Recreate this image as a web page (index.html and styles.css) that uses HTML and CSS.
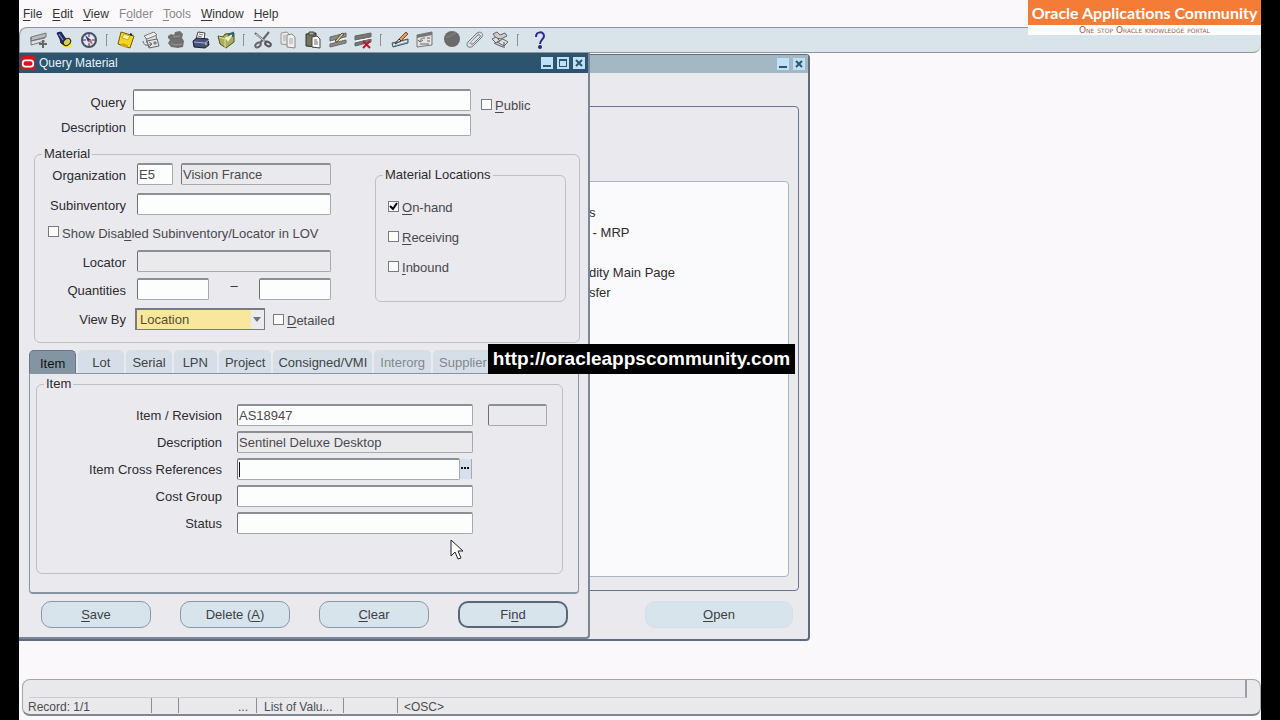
FILE: index.html
```
<!DOCTYPE html>
<html lang="en">
<head>
<meta charset="utf-8">
<title>Query Material</title>
<link rel="stylesheet" href="styles.css">
</head>
<body>
<div class="app">
  <nav class="menubar">
    <button class="menu"><u>F</u>ile</button>
    <button class="menu"><u>E</u>dit</button>
    <button class="menu"><u>V</u>iew</button>
    <button class="menu dim">F<u>o</u>lder</button>
    <button class="menu dim"><u>T</u>ools</button>
    <button class="menu"><u>W</u>indow</button>
    <button class="menu"><u>H</u>elp</button>
  </nav>

  <div class="toolbar">
    <button class="tool" aria-label="New"><svg viewBox="0 0 20 20"><path d="M2 7l15-4v4L2 11zM2 11l14-3M2 15l14-4M2 7v8" fill="#bbb" stroke="#777"/><path d="M14 10v8M10 14h8" stroke="#666" stroke-width="2"/></svg></button>
    <button class="tool" aria-label="Find"><svg viewBox="0 0 20 20"><ellipse cx="13" cy="15" rx="5" ry="3" fill="#f4e94a"/><path d="M3 3l4-1 4 6 3 2-4 5-3-2-1-4z" fill="#24306e" stroke="#111540"/><path d="M5 4l4 6" stroke="#8fa4de"/><ellipse cx="13" cy="12" rx="4" ry="3" transform="rotate(-40 13 12)" fill="#d9cf48" stroke="#222"/></svg></button>
    <button class="tool" aria-label="Navigator"><svg viewBox="0 0 20 20"><circle cx="10" cy="10" r="7" fill="#e6e9f2" stroke="#4b4e6a" stroke-width="2"/><path d="M10 4v3M10 13v3M4 10h3M13 10h3" stroke="#333"/><path d="M6 5l6 5-3 2z" fill="#26357e"/><path d="M14 15l-5-4 3-2z" fill="#b56a72"/></svg></button>
    <span class="sep"></span>
    <button class="tool" aria-label="Save"><svg viewBox="0 0 20 20"><path d="M5 2l13 4-4 12-12-4z" fill="#f5d51f" stroke="#6b5a12"/><path d="M8 4l6 2-2 4-6-2z" fill="#fff3a0" stroke="#c9ac22"/><path d="M7 13l5 2-1 3-6-2z" fill="#d2a514"/><path d="M14 4l2 1" stroke="#222" stroke-width="2"/></svg></button>
    <button class="tool" aria-label="Next Step"><svg viewBox="0 0 20 20"><path d="M3 6l10-4 3 3-10 4zM5 8l1 5M15 6l1 4" fill="#eee" stroke="#777"/><path d="M6 11l10-2 2 7-10 2z" fill="#e8e8e8" stroke="#666"/><path d="M2 11c1 5 4 5 8 3M8 12l3 2-3 3M14 11v4M12 13h4" stroke="#666" fill="none"/></svg></button>
    <button class="tool" aria-label="Switch Responsibility"><svg viewBox="0 0 20 20"><path d="M2 6l3-2 3 1 1-3 5-1 3 3-1 4 2 3-1 6-5 1-7-1-3-4 2-3-2-2z" fill="#707070"/><path d="M5 13l4 2 7-1M7 7l7-1" stroke="#989898"/></svg></button>
    <button class="tool" aria-label="Print"><svg viewBox="0 0 20 20"><path d="M7 2l7 1-1 7-8-1z" fill="#fff" stroke="#444"/><path d="M8 4l4 1M7 6l4 1" stroke="#777"/><path d="M2 11l4-3 11 1 1 6-4 3-11-1z" fill="#48527b" stroke="#171d40"/><path d="M3 12l11 1 4-3" stroke="#a6b4d0"/><circle cx="15" cy="14" r="1" fill="#d7cd58"/></svg></button>
    <button class="tool" aria-label="Close Form"><svg viewBox="0 0 20 20"><path d="M2 6l5 1 2-3 9-1v9l-8 6-6-4z" fill="#a9ae58" stroke="#4d5222"/><path d="M3 7l6 2v9M9 9l8-5" stroke="#dfe3a0"/><path d="M10 7l2 3 4-6" fill="none" stroke="#f3f5e4" stroke-width="2"/><path d="M12 5l5-2v4" fill="none" stroke="#3a6070" stroke-width="2"/></svg></button>
    <span class="sep"></span>
    <button class="tool" aria-label="Cut"><svg viewBox="0 0 20 20"><path d="M2 3l12 10M16 2L7 13" stroke="#666" stroke-width="2"/><path d="M3 4l11 9" stroke="#ddd"/><ellipse cx="5" cy="15" rx="3" ry="2" fill="none" stroke="#666" stroke-width="2" transform="rotate(-35 5 15)"/><ellipse cx="15" cy="14" rx="3" ry="2" fill="none" stroke="#555" stroke-width="2" transform="rotate(30 15 14)"/></svg></button>
    <button class="tool" aria-label="Copy"><svg viewBox="0 0 20 20"><path d="M3 3l6-1 2 2v11l-8-1z" fill="#e6e6e6" stroke="#999"/><path d="M9 5l5-1 3 3v11l-8-1z" fill="#eee" stroke="#888"/><path d="M11 9h4M11 11h4M11 13h4M5 6h3M5 8h3M5 10h3" stroke="#aaa"/></svg></button>
    <button class="tool" aria-label="Paste"><svg viewBox="0 0 20 20"><path d="M3 4l10-1v14l-10-1z" fill="#74765c" stroke="#333"/><path d="M6 2h5v3H6z" fill="#aaa" stroke="#444"/><path d="M9 7l5-1 3 3v9l-8-1z" fill="#fff" stroke="#444"/><path d="M11 10h3M11 12h4M11 14h4" stroke="#666"/></svg></button>
    <button class="tool" aria-label="Clear Record"><svg viewBox="0 0 20 20"><path d="M2 7l16-4v4L2 11zM2 14l16-4v3L2 17z" fill="#8b8b8b" stroke="#666"/><path d="M3 12l15-4" stroke="#fff"/><path d="M7 11l7-8 2 1-7 8z" fill="#ddd29a" stroke="#544b2d"/></svg></button>
    <button class="tool" aria-label="Delete"><svg viewBox="0 0 20 20"><path d="M2 6l16-3v4L2 10zM2 13l16-4v3L2 16z" fill="#777" stroke="#666"/><path d="M3 11l15-3" stroke="#fff"/><path d="M10 11l7 7M17 11l-7 7" stroke="#bb1830" stroke-width="2"/></svg></button>
    <span class="sep"></span>
    <button class="tool" aria-label="Edit Field"><svg viewBox="0 0 20 20"><path d="M2 13l16-4v4L3 17z" fill="#8fb4c0" stroke="#456"/><path d="M3 15l14-4" stroke="#fff"/><path d="M9 9l7-7 2 2-7 7z" fill="#e89a52" stroke="#775033"/><path d="M11 11l-6 3 4-5z" fill="#ddd" stroke="#333"/></svg></button>
    <button class="tool" aria-label="Zoom"><svg viewBox="0 0 20 20"><path d="M2 5l15-3v13L2 17z" fill="#e3e3e3" stroke="#777"/><path d="M2 5l15-3v3L2 8z" fill="#777"/><path d="M12 8h3M12 11h3M5 14h9M10 8c-4 0-5 2-5 4M3 10l2 2 3-2" stroke="#666" fill="none"/></svg></button>
    <button class="tool" aria-label="Translations"><svg viewBox="0 0 20 20"><circle cx="12" cy="9" r="8" fill="#6b6b6b"/><path d="M6 7c4 1 6-4 10-4" fill="none" stroke="#8c8c8c"/></svg></button>
    <button class="tool" aria-label="Attachments"><svg viewBox="0 0 20 20"><path d="M3 12l9-9c3-2 7 0 5 4l-9 9c-4 3-8 0-5-4zM6 12l7-7c2-1 3 1 2 2l-7 7c-2 1-3-1-2-2z" fill="none" stroke="#777"/><path d="M4 14l10-11" stroke="#bbb"/></svg></button>
    <button class="tool" aria-label="Folder Tools"><svg viewBox="0 0 20 20"><path d="M3 4l4-2 3 3 5-2 2 3-6 3-5-1z" fill="#ccc" stroke="#666"/><path d="M2 9l4-2 4 4-4 2zM7 12l6-3 5 3-4 4z" fill="#ddd" stroke="#666"/><path d="M8 15l5 2M14 12v6M4 13l4 2" stroke="#555"/></svg></button>
    <span class="sep"></span>
    <button class="tool" aria-label="Help"><svg viewBox="0 0 20 20"><path d="M9 7c0-6 8-6 8-1 0 3-4 4-4 8" fill="none" stroke="#28288e" stroke-width="2"/><circle cx="13" cy="17" r="2" fill="#28288e"/></svg></button>
  </div>

  <main class="desktop">
    <section class="window navigator">
      <header class="titlebar faded">
        <button class="winbtn" aria-label="Minimize"><svg viewBox="0 0 12 12"><path d="M2 9h8" stroke="#2d566f" stroke-width="2"/></svg></button>
        <button class="winbtn" aria-label="Close"><svg viewBox="0 0 12 12"><path d="M3 3l6 6M9 3l-6 6" stroke="#2d566f" stroke-width="2"/></svg></button>
      </header>
      <div class="nav-panel">
        <ul class="nav-list">
          <li>s</li>
          <li>&nbsp;- MRP</li>
          <li>&nbsp;</li>
          <li>dity Main Page</li>
          <li>sfer</li>
        </ul>
      </div>
      <div class="nav-actions"><button class="btn plain"><span><u>O</u>pen</span></button></div>
    </section>

    <section class="window query">
      <header class="titlebar">
        <svg class="logo" viewBox="0 0 16 16"><rect width="16" height="16" rx="2" fill="#d3161f"/><rect x="2" y="5" width="12" height="7" rx="3" fill="none" stroke="#fff" stroke-width="2"/></svg>
        <h1>Query Material</h1>
        <button class="winbtn" aria-label="Minimize"><svg viewBox="0 0 12 12"><path d="M2 9h8" stroke="#2d566f" stroke-width="2"/></svg></button>
        <button class="winbtn" aria-label="Maximize"><svg viewBox="0 0 12 12"><path d="M2 2h8v8H2z" fill="#2d566f"/><path d="M3 4h6v5H3z" fill="#bfe0f6"/></svg></button>
        <button class="winbtn" aria-label="Close"><svg viewBox="0 0 12 12"><path d="M3 3l6 6M9 3l-6 6" stroke="#2d566f" stroke-width="2"/></svg></button>
      </header>

      <form class="form" onsubmit="return false">
        <div class="head">
          <div class="head-fields">
            <label for="q">Query</label><input class="field" id="q" type="text">
            <label for="qd">Description</label><input class="field" id="qd" type="text">
          </div>
          <label class="check"><input type="checkbox"><span><u>P</u>ublic</span></label>
        </div>

        <fieldset class="group material">
          <legend>Material</legend>
          <div class="material-body">
            <div class="material-fields">
              <div class="row"><label for="org">Organization</label><input class="field short" id="org" type="text" value="E5"><input class="field grow" type="text" value="Vision France" aria-label="Organization name" readonly></div>
              <div class="row"><label for="sub">Subinventory</label><input class="field grow" id="sub" type="text"></div>
              <label class="check disabled-lov"><input type="checkbox"><span>Show Disa<u>b</u>led Subinventory/Locator in LOV</span></label>
              <div class="row tight"><label for="loc">Locator</label><input class="field grow" id="loc" type="text" readonly></div>
              <div class="row"><label for="qty">Quantities</label><input class="field qty" id="qty" type="text"><span class="dash">–</span><input class="field qty" type="text" aria-label="Quantity to"></div>
              <div class="row view"><label for="view">View By</label><span class="pick"><select id="view"><option>Location</option></select></span><label class="check"><input type="checkbox"><span><u>D</u>etailed</span></label></div>
            </div>
            <fieldset class="group locations">
              <legend>Material Locations</legend>
              <label class="check"><input type="checkbox" checked><span><u>O</u>n-hand</span></label>
              <label class="check"><input type="checkbox"><span><u>R</u>eceiving</span></label>
              <label class="check"><input type="checkbox"><span><u>I</u>nbound</span></label>
            </fieldset>
          </div>
        </fieldset>

        <div class="tabs">
          <button class="tab active">Item</button>
          <button class="tab lot">Lot</button>
          <button class="tab">Serial</button>
          <button class="tab lpn">LPN</button>
          <button class="tab">Project</button>
          <button class="tab consigned">Consigned/VMI</button>
          <button class="tab off">Interorg</button>
          <button class="tab off">Supplier</button>
        </div>
        <div class="tab-panel">
          <fieldset class="group item">
            <legend>Item</legend>
            <div class="item-fields">
              <label for="item">Item / Revision</label><input class="field" id="item" type="text" value="AS18947"><input class="field" type="text" aria-label="Revision" readonly>
              <label for="desc">Description</label><input class="field" id="desc" type="text" value="Sentinel Deluxe Desktop" readonly>
              <label for="xref">Item Cross References</label><span class="lov"><input class="field" id="xref" type="text"><button class="lov-btn" aria-label="List of values"><svg viewBox="0 0 11 20"><path d="M1 8h2v2H1zM4 8h2v2H4zM7 8h2v2H7z" fill="#111"/></svg></button><i class="caret"></i></span>
              <label for="cost">Cost Group</label><input class="field" id="cost" type="text">
              <label for="status">Status</label><input class="field" id="status" type="text">
            </div>
          </fieldset>
        </div>

        <div class="actions">
          <button class="btn"><span><u>S</u>ave</span></button>
          <button class="btn"><span>Delete (<u>A</u>)</span></button>
          <button class="btn"><span><u>C</u>lear</span></button>
          <button class="btn primary"><span>Fi<u>n</u>d</span></button>
        </div>
      </form>
    </section>
  </main>

  <footer class="status">
    <div class="message"></div>
    <div class="cells">
      <span class="cell record">Record: 1/1</span>
      <span class="cell tiny"></span>
      <span class="cell dots">...</span>
      <span class="cell list">List of Valu...</span>
      <span class="cell blank"></span>
      <span class="cell last">&lt;OSC&gt;</span>
    </div>
  </footer>

  <aside class="banner">
    <div class="banner-name">Oracle Applications Community</div>
    <div class="banner-tag">One stop Oracle knowledge portal</div>
  </aside>
  <div class="url">http://oracleappscommunity.com</div>
  <svg class="pointer" viewBox="0 0 14 22"><path d="M1 1v16l4-4 3 7 3-1-3-7h5z" fill="#fff" stroke="#222"/></svg>
</div>
</body>
</html>
```

FILE: styles.css
```
* { box-sizing: border-box; }

body {
  margin: 0;
  padding: 0 19px;
  background: #000;
  color: #2c2c30;
  font: 13px/16px "Liberation Sans", Arial, sans-serif;
}

button, input, select { font: inherit; color: inherit; margin: 0; }
button { padding: 0; border: 0; background: none; }
u { text-decoration: underline; text-underline-offset: 2px; }

.app {
  position: relative;
  display: flex;
  flex-direction: column;
  height: 100vh;
  overflow: hidden;
  background: #faf8fa;
}

/* Menu and toolbar */
.menubar {
  display: flex;
  gap: 10px;
  height: 27px;
  padding-left: 4px;
  font-size: 12px;
}
.menu { color: #333; }
.menu.dim { color: #888; }

.toolbar {
  display: flex;
  align-items: center;
  height: 26px;
  padding-left: 6px;
  background: #d8e3ea;
  border: 1px solid #8f959c;
  border-right: 0;
  border-radius: 8px 0 8px 0;
}
.tool { width: 25px; height: 20px; }
.tool svg { display: block; width: 20px; height: 20px; margin: auto; fill: none; }
.sep {
  width: 2px;
  height: 12px;
  margin: 0 5px;
  border-left: 1px solid #8a9098;
  border-top: 1px solid #8a9098;
}

/* Windows */
.desktop { position: relative; flex: 1; }
.window {
  position: absolute;
  display: flex;
  flex-direction: column;
  background: #eae9ee;
  border: 1px solid #5c6b80;
}
.navigator { left: 0; top: 1px; width: 791px; height: 587px; border-width: 1px 2px 2px 1px; border-radius: 0 4px 4px 0; }
.query { left: 0; top: 0; width: 571px; height: 586px; border-width: 0 2px 2px 0; border-color: #7b8799; border-radius: 0 0 4px 0; }

.titlebar {
  display: flex;
  flex: none;
  align-items: center;
  justify-content: flex-end;
  gap: 4px;
  height: 20px;
  padding: 0 3px 0 2px;
  background: #2c546f;
}
.titlebar h1 { flex: 1; margin: 0; color: #e8f2f8; font-size: 12px; font-weight: normal; line-height: 20px; }
.faded { background: #a2b9c4; height: 18px; }
.logo { width: 14px; height: 14px; }
.winbtn { width: 12px; height: 12px; background: #bfe0f6; }
.winbtn svg { display: block; }

.nav-panel {
  display: flex;
  flex: 1;
  margin: 33px 9px 0 0;
  padding: 74px 9px 13px 0;
  border: 1px solid #667594;
  border-radius: 4px;
}
.nav-list {
  flex: 1;
  margin: 0;
  padding: 21px 0 0 567px;
  list-style: none;
  line-height: 20px;
  background: #faf9fb;
  border: 1px solid #a9b5c4;
  border-radius: 4px;
}
.nav-actions { display: flex; justify-content: flex-end; padding: 10px 15px 11px 0; }

/* Controls */
.field {
  min-width: 0;
  height: 22px;
  padding: 0 1px;
  background: #fcfdfd;
  border: 1px solid #a5a9b0;
  border-top: 2px solid #8c8f94;
  border-left-color: #6c6f76;
  border-radius: 2px;
  color: #4a4a4e;
  outline: 0;
}
.field[readonly] { background: #eae9ec; }

.check { display: flex; align-items: center; gap: 3px; }
.check input {
  appearance: none;
  flex: none;
  width: 11px;
  height: 11px;
  background: #fcfcfc;
  border: 1px solid #777b82;
}
.check span { padding-top: 3px; color: #48484c; }
.check input:checked {
  background: #fcfcfc url("data:image/svg+xml,%3Csvg xmlns='http://www.w3.org/2000/svg' viewBox='0 0 9 9'%3E%3Cpath d='M1 4l3 3 4-6' fill='none' stroke='black' stroke-width='2'/%3E%3C/svg%3E");
}

.btn {
  width: 110px;
  height: 27px;
  background: #d8e4eb;
  border: 1px solid #8a99a8;
  border-radius: 10px;
  color: #3c4046;
}
.btn.primary { border: 2px solid #56677a; }
.btn.plain { width: 148px; border-color: #d2e0e8; }

/* Query form */
.form { display: flex; flex: 1; flex-direction: column; padding-bottom: 9px; }
.form label { white-space: nowrap; }

.head { display: flex; gap: 10px; padding: 16px 0 0; }
.head-fields {
  display: grid;
  grid-template-columns: 107px 338px;
  gap: 3px 7px;
}
.head-fields label { text-align: right; padding-top: 6px; }
.head-fields .field { width: 100%; }
.head .check { align-self: flex-start; padding-top: 6px; }

.group { margin: 0; padding: 0; border: 1px solid #bfc0c6; border-radius: 6px; min-width: 0; }
.group legend { margin-left: 7px; padding: 0 2px; }

.material { margin: 10px 8px 0 15px; height: 197px; }
.material-body { display: flex; justify-content: space-between; padding: 0 13px 0 0; }
.material-fields { display: flex; flex-direction: column; width: 296px; padding-top: 1px; }
.row { display: flex; margin-bottom: 8px; }
.row.tight { margin-bottom: 6px; }
.row > label:first-child { width: 91px; margin-right: 11px; padding-top: 5px; text-align: right; }
.row .grow { flex: 1; }
.short { width: 36px; margin-right: 8px; }
.disabled-lov { height: 19px; margin: 0 0 8px 13px; }
.disabled-lov input { align-self: flex-start; margin-top: 3px; }
.qty { width: 72px; }
.dash { flex: 1; text-align: center; }
.row.view { margin: 0; }
.row.view > * { flex: none; }
.row.view > label:first-child { margin-right: 9px; padding-top: 4px; }
.pick { position: relative; width: 130px; margin-right: 8px; }
.pick select {
  appearance: none;
  width: 100%;
  height: 22px;
  padding: 0 3px;
  background: linear-gradient(to right, #f8e79c 114px, #ebebf0 114px);
  border: 1px solid #777b82;
  border-width: 2px 1px 1px 2px;
  color: #55502f;
}
.pick::after {
  content: "";
  position: absolute;
  right: 4px;
  top: 9px;
  border: 4px solid transparent;
  border-top: 5px solid #70737a;
  border-bottom: 0;
}

.locations { width: 191px; height: 135px; margin-top: 5px; }
.locations .check { margin: 14px 0 0 12px; height: 16px; }
.locations legend + .check { margin-top: 15px; }

/* Tabs */
.tabs { display: flex; gap: 2px; margin-top: 7px; padding-left: 10px; }
.tab {
  height: 23px;
  padding: 3px 6px 0;
  background: #d6dfe7;
  border-radius: 5px 5px 0 0;
  color: #404348;
}
.tab.lot { padding: 3px 14px 0; }
.tab.lpn { padding: 3px 9px 0; }
.tab.consigned { padding: 3px 5px 0; }
.tab.active { padding: 3px 10px 0; background: #8395a3; border: 1px solid #667888; border-bottom: 0; color: #111; }
.tab.off { color: #83878e; }

.tab-panel {
  flex: 1;
  margin: 0 9px 0 10px;
  padding: 2px 15px 18px 6px;
  border: 1px solid #8794a2;
  border-bottom-width: 2px;
  border-radius: 0 0 4px 4px;
}
.item { height: 100%; }
.item-fields {
  display: grid;
  grid-template-columns: 185px 236px 59px;
  column-gap: 15px;
  row-gap: 5px;
  padding-top: 12px;
}
.item-fields > label { grid-column: 1; padding-top: 4px; text-align: right; }
.item-fields .field { width: 100%; }
.lov { position: relative; display: flex; }
.lov-btn { flex: none; width: 12px; height: 20px; margin: 1px 1px 0 0; background: #d5e0e8; border-right: 1px solid #a5a9b0; }
.lov-btn svg { display: block; width: 11px; }
.caret { position: absolute; left: 2px; top: 4px; width: 1px; height: 15px; background: #111; }

.actions { display: flex; justify-content: space-between; padding: 7px 20px 0 22px; }

/* Status bar */
.status {
  height: 37px;
  margin: 0 0 4px 3px;
  background: #e9e9ec;
  border: 1px solid #a2a7ae;
  border-bottom: 2px solid #7c8793;
  border-radius: 8px;
}
.message { height: 18px; margin: 0 13px 0 6px; border-right: 2px solid #9a9ea6; border-bottom: 1px solid #cbcbd0; }
.cells { display: flex; font-size: 12px; line-height: 18px; padding-left: 5px; color: #4c4c52; }
.cell { height: 15px; border-right: 1px solid #8a8e96; white-space: nowrap; }
.record { width: 124px; }
.tiny { width: 27px; }
.dots { width: 78px; padding-right: 8px; text-align: right; }
.list { width: 87px; padding-left: 7px; }
.blank { width: 54px; }
.last { padding-left: 6px; border: 0; }

/* Overlays */
.banner {
  position: absolute;
  top: 0;
  right: 0;
  width: 233px;
  text-align: center;
  white-space: nowrap;
  background: #fefdfd;
}
.banner-name { background: #f57c37; color: #fff; font: bold 16px/25px Lato, sans-serif; }
.banner-tag { color: #a85f3f; font: small-caps 9px/10px "DejaVu Sans", sans-serif; }
.url {
  position: absolute;
  left: 469px;
  top: 344px;
  width: 307px;
  background: #000;
  color: #fff;
  font-size: 19px;
  font-weight: bold;
  line-height: 30px;
  text-align: center;
}
.pointer { position: absolute; left: 431px; top: 539px; width: 14px; height: 22px; }
```
